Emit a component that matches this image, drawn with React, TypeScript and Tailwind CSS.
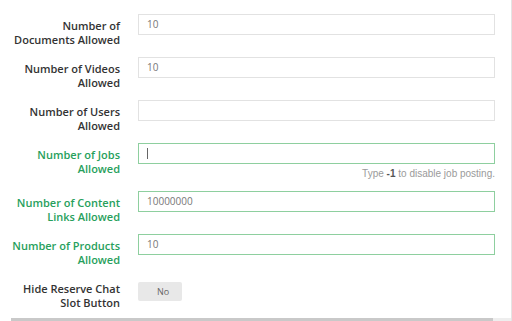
import React from 'react';

type Field = {
  label: [string, string];
  value: string;
  green?: boolean;
  help?: boolean;
  cursor?: boolean;
};

const FIELDS: Field[] = [
  { label: ['Number of', 'Documents Allowed'], value: '10' },
  { label: ['Number of Videos', 'Allowed'], value: '10' },
  { label: ['Number of Users', 'Allowed'], value: '' },
  { label: ['Number of Jobs', 'Allowed'], value: '', green: true, help: true, cursor: true },
  { label: ['Number of Content', 'Links Allowed'], value: '10000000', green: true },
  { label: ['Number of Products', 'Allowed'], value: '10', green: true },
];

function Row({ f }: { f: Field }) {
  return (
    <div className="flex items-start">
      <div
        className={`w-[120px] shrink-0 pt-[5px] text-right text-[11px] font-semibold leading-[14px] ${
          f.green ? 'text-[#27a05c]' : 'text-[#333333]'
        }`}
      >
        <div>{f.label[0]}</div>
        <div>{f.label[1]}</div>
      </div>
      <div className="ml-[18px] w-[357px]">
        <div
          className={`flex h-[21px] items-center border px-[8px] text-[10px] text-[#777777] ${
            f.green ? 'border-[#8ecf9f]' : 'border-[#e2e2e2]'
          }`}
        >
          {f.cursor ? <span className="h-[11px] w-px bg-[#666]" /> : f.value}
        </div>
        {f.help && (
          <div className="mt-[3px] text-right font-['Liberation_Sans',Arial,sans-serif] text-[10px] leading-[14px] text-[#9a9a9a]">
            Type <b className="text-[#555]">-1</b> to disable job posting.
          </div>
        )}
      </div>
    </div>
  );
}

export default function App() {
  return (
    <div className="relative h-[321px] w-[512px] overflow-hidden bg-white font-['Open_Sans',sans-serif]">
      <div className="flex flex-col gap-[10px] pt-[14px]">
        {FIELDS.map((f, i) => (
          <Row key={i} f={f} />
        ))}
        <div className="mt-[5px] flex items-start">
          <div className="w-[120px] shrink-0 text-right text-[11px] font-semibold leading-[14px] text-[#333333]">
            <div>Hide Reserve Chat</div>
            <div>Slot Button</div>
          </div>
          <div className="ml-[18px] flex h-[19px] w-[44px] items-center justify-center rounded-[2px] bg-[#e8e8e8] text-[9px] text-[#666]">
            <span className="ml-[6px]">No</span>
          </div>
        </div>
      </div>
      <div className="absolute right-0 top-0 h-full w-px bg-[#e4e4e4]" />
      <div className="absolute bottom-0 left-[11px] h-[3px] w-[482px] bg-[#c9c9c9]" />
      <div className="absolute bottom-0 left-[493px] h-[3px] w-[18px] bg-[#eeeeee]" />
    </div>
  );
}
